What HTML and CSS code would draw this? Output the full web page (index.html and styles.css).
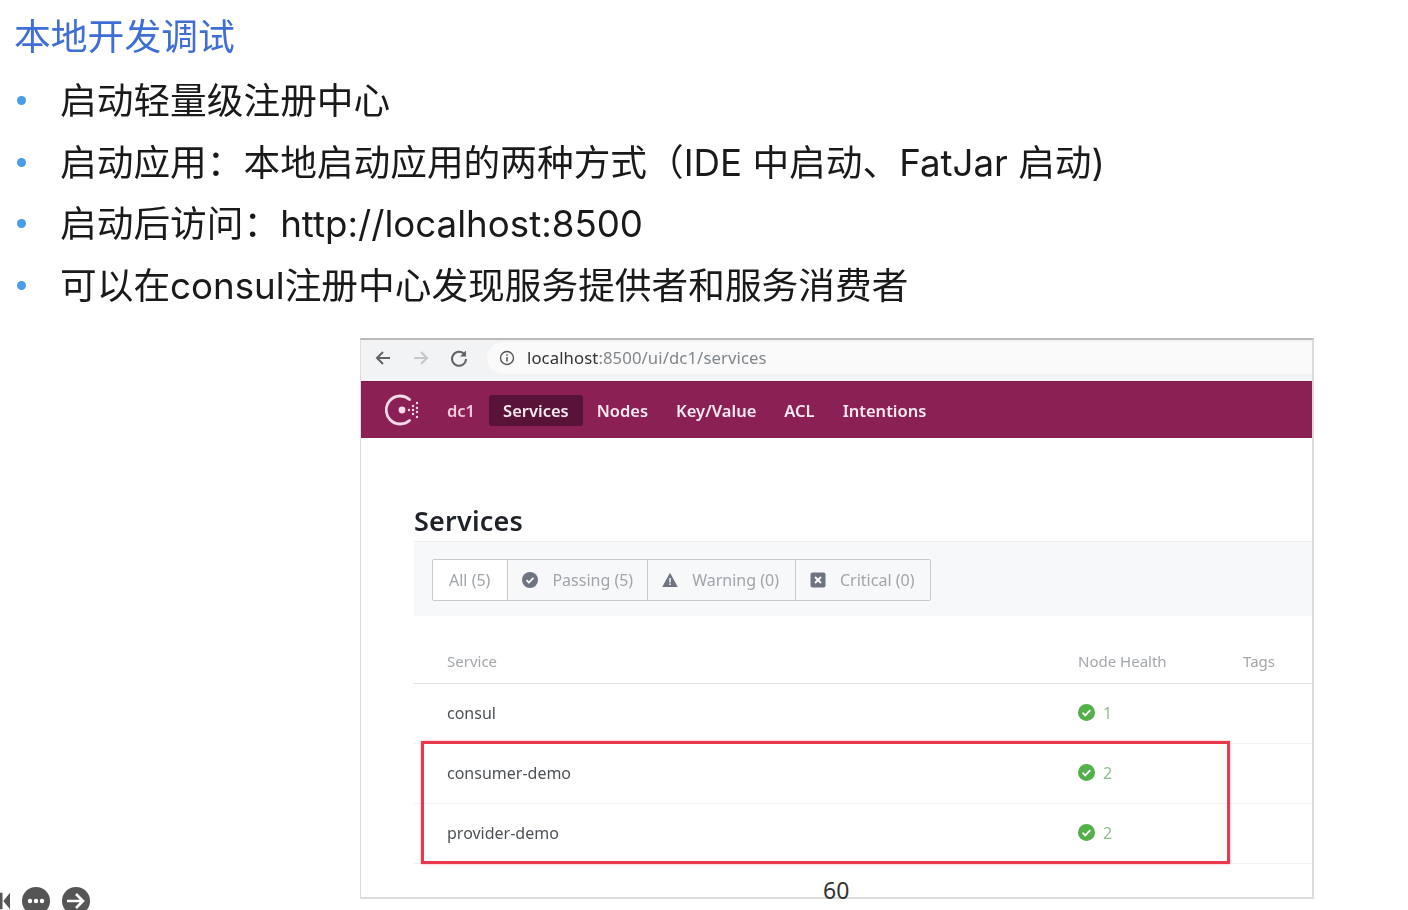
FILE: index.html
```html
<!DOCTYPE html>
<html lang="zh-CN">
<head>
<meta charset="utf-8">
<title>本地开发调试</title>
<link rel="stylesheet" href="styles.css">
</head>
<body>
<main class="slide">
  <h1 class="title">本地开发调试</h1>
  <ul class="points">
    <li>启动轻量级注册中心</li>
    <li>启动应用：本地启动应用的两种方式（IDE 中启动、FatJar 启动)</li>
    <li>启动后访问：http://localhost:8500</li>
    <li>可以在consul注册中心发现服务提供者和服务消费者</li>
  </ul>
  <section class="browser">
    <div class="chrome">
      <svg class="nav-ico" viewBox="0 0 20 20"><path d="M17 10H4M10 4l-6 6 6 6" fill="none" stroke="#5f6368" stroke-width="2"/></svg>
      <svg class="nav-ico" viewBox="0 0 20 20"><path d="M3 10h13M10 4l6 6-6 6" fill="none" stroke="#c4c6c8" stroke-width="2"/></svg>
      <svg class="nav-ico" viewBox="0 0 20 20"><path d="M15.5 6.5A7 7 0 1 0 17 11" fill="none" stroke="#5f6368" stroke-width="2"/><path d="M17 2.5v6h-6z" fill="#5f6368"/></svg>
      <div class="omnibox">
        <svg class="info" viewBox="0 0 16 16"><circle cx="8" cy="8" r="6.5" fill="none" stroke="#555" stroke-width="1.4"/><path d="M8 7v4.5M8 4.2v1.6" stroke="#555" stroke-width="1.5"/></svg>
        <span class="url"><b>localhost</b>:8500/ui/dc1/services</span>
      </div>
    </div>
    <nav class="topnav">
      <svg class="logo" viewBox="0 0 36 36">
        <path d="M24.5 7.5A14 14 0 1 0 24.5 28.5" fill="none" stroke="#f3dbe9" stroke-width="2.8" stroke-linecap="round"/>
        <circle cx="17" cy="18" r="3.4" fill="#f3dbe9"/>
        <g fill="#f3dbe9"><circle cx="24" cy="18" r="1.2"/><circle cx="28" cy="14" r="1.2"/><circle cx="28" cy="18" r="1.2"/><circle cx="28" cy="22" r="1.2"/><circle cx="32" cy="11" r="1.2"/><circle cx="32" cy="16" r="1.2"/><circle cx="32" cy="20" r="1.2"/><circle cx="32" cy="25" r="1.2"/></g>
      </svg>
      <a class="nav-item dc">dc1</a>
      <a class="nav-item active">Services</a>
      <a class="nav-item">Nodes</a>
      <a class="nav-item">Key/Value</a>
      <a class="nav-item">ACL</a>
      <a class="nav-item">Intentions</a>
    </nav>
    <div class="content">
      <h2 class="heading">Services</h2>
      <div class="filterbar">
        <div class="filters">
          <span class="filter selected">All (5)</span>
          <span class="filter"><svg class="f-ico" viewBox="0 0 16 16"><circle cx="8" cy="8" r="8" fill="#6f7580"/><path d="M4.5 8.2l2.4 2.4 4.5-4.8" fill="none" stroke="#fff" stroke-width="1.7"/></svg>Passing (5)</span>
          <span class="filter"><svg class="f-ico" viewBox="0 0 16 16"><path d="M8 .8L15.8 15H.2z" fill="#6f7580"/><path d="M8 6v4.5M8 11.5v1.6" stroke="#fff" stroke-width="1.4"/></svg>Warning (0)</span>
          <span class="filter"><svg class="f-ico" viewBox="0 0 16 16"><rect x="0.5" y="0.5" width="15" height="15" rx="2" fill="#6f7580"/><path d="M5 5l6 6M11 5l-6 6" stroke="#fff" stroke-width="1.8"/></svg>Critical (0)</span>
        </div>
      </div>
      <div class="row head">
        <span class="col-name">Service</span>
        <span class="col-health">Node Health</span>
        <span class="col-tags">Tags</span>
      </div>
      <div class="row">
        <span class="col-name">consul</span>
        <span class="col-health"><svg class="ok" viewBox="0 0 16 16"><circle cx="8" cy="8" r="8" fill="#54b04a"/><path d="M4.3 8.2l2.5 2.5 4.8-5" fill="none" stroke="#fff" stroke-width="1.7"/></svg><i class="num">1</i></span>
      </div>
      <div class="row">
        <span class="col-name">consumer-demo</span>
        <span class="col-health"><svg class="ok" viewBox="0 0 16 16"><circle cx="8" cy="8" r="8" fill="#54b04a"/><path d="M4.3 8.2l2.5 2.5 4.8-5" fill="none" stroke="#fff" stroke-width="1.7"/></svg><i class="num">2</i></span>
      </div>
      <div class="row">
        <span class="col-name">provider-demo</span>
        <span class="col-health"><svg class="ok" viewBox="0 0 16 16"><circle cx="8" cy="8" r="8" fill="#54b04a"/><path d="M4.3 8.2l2.5 2.5 4.8-5" fill="none" stroke="#fff" stroke-width="1.7"/></svg><i class="num">2</i></span>
      </div>
      <div class="highlight"></div>
    </div>
  </section>
  <div class="page-no">60</div>
  <div class="player">
    <svg class="pl-prev" viewBox="0 0 12 28"><path d="M0 4h3v20H0zM12 4v20L4 14z" fill="#555"/></svg>
    <svg class="pl-btn" viewBox="0 0 28 28"><circle cx="14" cy="14" r="14" fill="#555"/><circle cx="8" cy="14" r="2.2" fill="#fff"/><circle cx="14" cy="14" r="2.2" fill="#fff"/><circle cx="20" cy="14" r="2.2" fill="#fff"/></svg>
    <svg class="pl-btn" viewBox="0 0 28 28"><circle cx="14" cy="14" r="14" fill="#555"/><path d="M5 14h15M14 7l7 7-7 7" fill="none" stroke="#fff" stroke-width="2.6"/></svg>
  </div>
</main>
</body>
</html>
```

FILE: styles.css
```css
* { box-sizing: border-box; }
html, body { margin: 0; height: 100%; background: #fff; overflow: hidden; }
body { font-family: "Noto Sans", "Noto Sans CJK SC", sans-serif; }
.slide { position: relative; width: 1408px; height: 910px; overflow: hidden; padding: 9px 0 0 14px; }

.title {
  margin: 0;
  font-family: "Noto Sans CJK SC", sans-serif;
  font-size: 36.8px;
  line-height: 50px;
  font-weight: 400;
  color: #3f6fd6;
  filter: blur(.5px);
}
.points {
  list-style: none;
  margin: 11px 0 0;
  padding: 0 0 0 46px;
  font-family: "Inter", "Noto Sans CJK SC", sans-serif;
  font-size: 36.7px;
  line-height: 61.5px;
  font-weight: 400;
  color: #1a1a1a;
  white-space: nowrap;
}
.points li { position: relative; filter: blur(.5px); }
.points li::before {
  content: "";
  position: absolute;
  left: -43px;
  top: 26px;
  width: 9px;
  height: 9px;
  border-radius: 50%;
  background: #4a9be8;
}

.browser {
  position: absolute;
  left: 360px;
  top: 338px;
  width: 954px;
  height: 561px;
  border: 2px solid #dcdcdc;
  border-top-color: #b9b9b9;
  border-left-width: 1px;
  background: #fff;
  filter: blur(.6px);
}
.chrome {
  display: flex;
  align-items: center;
  height: 41px;
  padding: 0 0 6px 12px;
  background: #f1f3f4;
  gap: 18px;
}
.nav-ico { width: 20px; height: 20px; flex: none; }
.omnibox {
  flex: 1;
  display: flex;
  align-items: center;
  gap: 12px;
  height: 32px;
  padding-left: 12px;
  border-radius: 16px 0 0 16px;
  background: #fafafa;
}
.info { width: 16px; height: 16px; }
.url { font-size: 16.7px; letter-spacing: .1px; color: #80868b; }
.url b { font-weight: 400; color: #333; }

.topnav {
  display: flex;
  align-items: center;
  height: 57px;
  padding-left: 24px;
  background: #8b2055;
  border-top: 1px solid #7a1c4a;
}
.logo { width: 36px; height: 36px; margin-right: 26px; }
.nav-item {
  padding: 0 14px;
  height: 31px;
  line-height: 32px;
  font-size: 16.5px;
  font-weight: 600;
  color: #f6e9f0;
  border-radius: 3px;
}
.nav-item.dc { padding: 0; margin-right: 14px; color: #f0c9dc; }
.nav-item.active { background: #5a1338; }

.content { position: relative; padding: 65px 0 0 53px; }
.heading {
  margin: 0;
  font-size: 27px;
  line-height: 36px;
  font-weight: 600;
  letter-spacing: .2px;
  color: #1f2328;
}
.filterbar {
  display: flex;
  align-items: center;
  height: 75px;
  margin-top: 2px;
  padding: 2px 0 0 18px;
  background: #f7f8fa;
  border-top: 1px solid #eceef0;
}
.filters {
  display: flex;
  height: 42px;
  border: 1px solid #c7cace;
  border-radius: 2px;
}
.filter {
  display: flex;
  align-items: center;
  gap: 14px;
  padding: 0 14px 0 14px;
  font-size: 16px;
  color: #a0a5ab;
  border-left: 1px solid #c7cace;
}
.filter:first-child { border-left: 0; padding: 0 17px 0 16px; }
.filter.selected { background: #fff; }
.filter:nth-child(3) { padding-right: 16px; }
.filter:last-child { padding-right: 16px; }
.f-ico { width: 16px; height: 16px; flex: none; }

.row {
  display: flex;
  align-items: center;
  height: 60px;
  padding: 0 0 2px 33px;
  font-size: 16px;
  color: #4d5257;
  border-bottom: 1px solid #f1f1f1;
}
.row.head {
  height: 68px;
  padding: 22px 0 0 33px;
  font-size: 15px;
  color: #a3a7ab;
  border-bottom: 1px solid #e3e3e3;
}
.col-name { width: 631px; }
.col-health { display: flex; align-items: center; gap: 8px; width: 165px; }
.ok { width: 17px; height: 17px; flex: none; }
.num { font-style: normal; color: #8fbf8a; }

.highlight {
  position: absolute;
  left: 60px;
  top: 303px;
  width: 809px;
  height: 123px;
  border: 3px solid #e8394d;
  box-shadow: 0 0 2px rgba(232, 57, 77, .5);
}

.page-no {
  position: absolute;
  left: 823px;
  top: 875px;
  font-size: 23px;
  line-height: 30px;
  color: #333;
}
.player {
  position: absolute;
  left: 0;
  top: 887px;
  display: flex;
  align-items: flex-start;
  gap: 12px;
}
.pl-prev { width: 10px; height: 28px; }
.pl-btn { width: 28px; height: 28px; }
```
